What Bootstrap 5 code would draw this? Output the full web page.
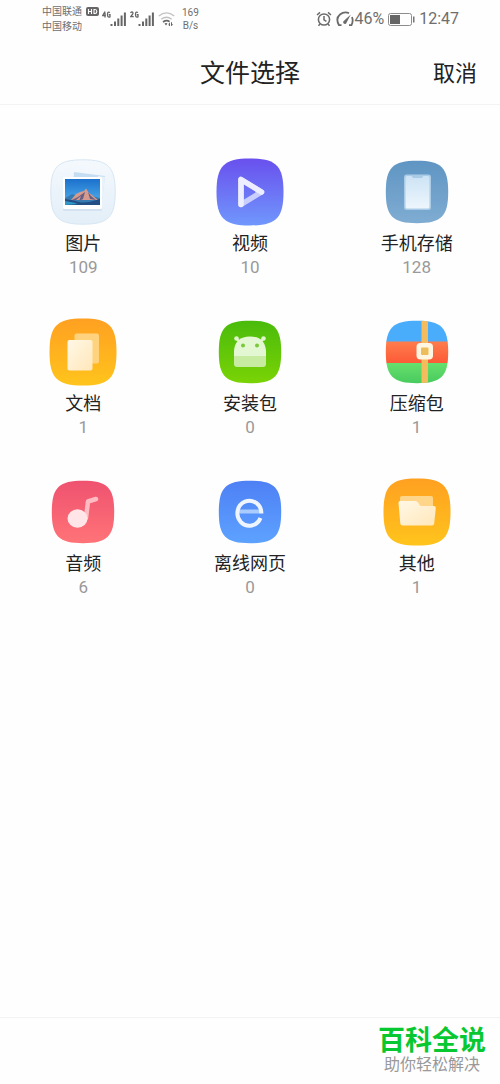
<!DOCTYPE html>
<html lang="zh-CN">
<head>
<meta charset="utf-8">
<meta name="viewport" content="width=device-width, initial-scale=1">
<title>文件选择</title>
<link href="https://cdn.jsdelivr.net/npm/bootstrap@5.3.0/dist/css/bootstrap.min.css" rel="stylesheet">
<style>
body{font-family:Roboto,"Noto Sans CJK SC",sans-serif;background:#fefefe;color:#222}
svg{display:block;flex:none}
.statusbar{height:38px;padding:0 41px 0 42px;color:#6e6e6e;font-size:16px;line-height:20px}
.tiny{font-size:10px;line-height:14px;gap:3px}
.carrier{line-height:15px}
.speed{line-height:13px;margin-left:4px}
.topbar{height:67px;padding:5px 23px 0;border-bottom:1px solid #f3f3f3}
.topbar h1{font-size:25px;line-height:32px;font-weight:400}
.cancel{font-size:22px;line-height:32px;color:#222}
.tiles{padding-top:52px}
.tile{height:160px;color:#222}
.tile svg{width:70px;height:70px}
.tile-name{font-size:18px;line-height:24px;margin-top:5px}
.tile-count{font-size:17px;line-height:22px;color:#999}
.bottombar{height:67px;padding:7px 14px 0 0;border-top:1px solid #f3f3f3}
.brand{font-size:27px;line-height:32px;font-weight:700;color:#08c832}
.slogan{font-size:16px;line-height:16px;color:#999}
</style>
</head>
<body>
<svg width="0" height="0" class="position-absolute" aria-hidden="true">
<defs>
<path id="sq" d="M0-100C78-100 100-78 100 0S78 100 0 100-100 78-100 0-78-100 0-100Z"/>
<linearGradient id="gPic" x2="0" y2="1"><stop stop-color="#f4f9fd"/><stop offset="1" stop-color="#e3eef8"/></linearGradient>
<linearGradient id="gVid" x2="0" y2="1"><stop stop-color="#6950ee"/><stop offset="1" stop-color="#7097fc"/></linearGradient>
<linearGradient id="gPho" x2="0" y2="1"><stop stop-color="#5f95c3"/><stop offset="1" stop-color="#7facd2"/></linearGradient>
<linearGradient id="gOra" x2="0" y2="1"><stop stop-color="#ffa021"/><stop offset="1" stop-color="#ffc41c"/></linearGradient>
<linearGradient id="gGre" x2="0" y2="1"><stop stop-color="#4abb0b"/><stop offset="1" stop-color="#7ad305"/></linearGradient>
<linearGradient id="gRed" x2="0" y2="1"><stop stop-color="#ef5270"/><stop offset="1" stop-color="#ff7377"/></linearGradient>
<linearGradient id="gBlu" x2="0" y2="1"><stop stop-color="#4e80f5"/><stop offset="1" stop-color="#5da2ff"/></linearGradient>
<linearGradient id="gSky" x2="0" y2="1"><stop stop-color="#1b70cc"/><stop offset="1" stop-color="#55b5ef"/></linearGradient>
<linearGradient id="gZr" x2="0" y2="1"><stop stop-color="#ff7d4c"/><stop offset="1" stop-color="#fc5a38"/></linearGradient>
<linearGradient id="gZg" x2="0" y2="1"><stop stop-color="#66df6d"/><stop offset="1" stop-color="#43c75b"/></linearGradient>
<linearGradient id="gScr" x2="0" y2="1"><stop stop-color="#cce3f5"/><stop offset="1" stop-color="#edf6fc"/></linearGradient>
<linearGradient id="gDoc" x2="1" y2="1"><stop stop-color="#fff8e6"/><stop offset="1" stop-color="#ffe7ba"/></linearGradient>
<clipPath id="clipZip"><use href="#sq" transform="translate(35 35) scale(.312)"/></clipPath>
</defs>
</svg>

<div class="d-flex flex-column min-vh-100">
<div class="statusbar d-flex justify-content-between align-items-center">
  <div class="d-flex align-items-center tiny">
    <div class="carrier">
      <div class="d-flex align-items-center">中国联通
        <svg class="ms-1" width="13" height="9" viewBox="0 0 13 9" role="img" aria-label="HD"><rect width="13" height="9" rx="2" fill="#666"/><path d="M2.5 2v5M5.5 2v5M2.5 4.5h3M8 2.5v4h1q1.8 0 1.8-2t-1.8-2z" fill="none" stroke="#fff" stroke-width="1.1"/></svg>
      </div>
      <div>中国移动</div>
    </div>
    <svg width="25" height="18" viewBox="0 0 25 18" role="img" aria-label="4G"><path d="M3 1.500L.7 5.500h3.200M3 2.500v5M8 2.500q-2.500-1.500-2.500 2t2.500 2.300V4.700H6.800" fill="none" stroke="#666" stroke-width="1.300"/><path d="M8.500 14h2v2h-2zM12 11.500h2V16h-2zM15.300 8.500h2V16h-2zM18.600 5.500h2V16h-2zM21.900 2.500h2V16h-2z" fill="#666"/></svg>
    <svg width="25" height="18" viewBox="0 0 25 18" role="img" aria-label="2G"><path d="M.6 3q.3-1.300 1.500-1.100 1.700.8.300 2.600L.7 6.700h3M8 2.500q-2.500-1.500-2.500 2t2.500 2.300V4.700H6.800" fill="none" stroke="#666" stroke-width="1.300"/><path d="M8.500 14h2v2h-2zM12 11.500h2V16h-2zM15.300 8.500h2V16h-2zM18.600 5.500h2V16h-2zM21.900 2.500h2V16h-2z" fill="#666"/></svg>
    <svg width="17" height="16" viewBox="0 0 17 16" role="img" aria-label="Wi-Fi"><path d="M.8 5Q8.500-1.300 16.200 5M3.200 8.200q5.300-4 10.600 0" fill="none" stroke="#c2c2c2" stroke-width="1.400"/><path d="M5 11q3.500-2.400 6.600-.4" fill="none" stroke="#666" stroke-width="1.700"/><path d="M6.500 12.500q1.500-1 3 0L8 14.500zM10.500 13l1.500-1.800V15h-1zM13 11.200h1v2h1.300L13.500 15H13z" fill="#666"/></svg>
    <div class="speed text-center">169<br>B/s</div>
  </div>
  <div class="d-flex align-items-center">
    <svg width="16" height="16" viewBox="0 0 16 16" fill="none" stroke="#6b6b6b" stroke-width="1.500" role="img" aria-label="闹钟"><circle cx="8" cy="8.500" r="5.600"/><path d="M8 5v3.800l2.400 1.500M1 4l3-2.600M15 4l-3-2.600M4 13l-1.500 1.700M12 13l1.500 1.700"/></svg>
    <svg class="ms-1" width="18" height="16" viewBox="0 0 18 16" fill="none" stroke="#6b6b6b" stroke-width="1.800" role="img" aria-label="性能"><path d="M5.500 14.200H3Q-.8 7.500 4 3.500 8 .2 13 2.100M16 6q1.600 4.300-.6 8.200h-2.400"/><path d="M14.800 3.500L10.500 11.700a1.700 1.700 0 1 1-2.500-1.900z" fill="#6b6b6b" stroke="none"/></svg>
    <span>46%</span>
    <svg class="ms-1" width="27" height="13" viewBox="0 0 27 13" role="img" aria-label="电量"><rect x=".5" y=".5" width="23" height="12" rx="2" fill="none" stroke="#8c8c8c"/><path d="M2 2h10v9H2z" fill="#666"/><path d="M25 3.500h1.500v6H25z" fill="#777"/></svg>
    <span class="ms-1">12:47</span>
  </div>
</div>

<header class="topbar row g-0 align-items-center">
  <div class="col"></div>
  <h1 class="col-auto m-0">文件选择</h1>
  <div class="col text-end"><button type="button" class="cancel btn border-0 p-0">取消</button></div>
</header>

<main class="flex-grow-1">
<div class="tiles row row-cols-3 g-0 text-center">
  <div class="col"><a href="#pictures" class="tile d-flex flex-column align-items-center text-decoration-none">
    <svg viewBox="0 0 70 70" aria-hidden="true"><use href="#sq" transform="translate(35 35) scale(.322)" fill="url(#gPic)" stroke="#d5e5f2" stroke-width="3"/><path d="M26 15l31 4-3 25-30-5z" fill="#c5ddf2"/><path d="M50 19l7 1-3 26-4-1z" fill="#e8f2fa"/><rect x="15" y="21" width="39" height="33" rx="1.500" fill="#c9d9e8" opacity=".6"/><rect x="15" y="20" width="39" height="32" rx="1.500" fill="#fff"/><path d="M17 22h35v26H17z" fill="url(#gSky)"/><path d="M17 41l7-4 6 2 6-5 8 5 8 2v7H17z" fill="#377bb3"/><path d="M23 43l5-6 4-2 4-1 2-2.500 3 4.500 3 2 6 5z" fill="#d59b8c"/><path d="M37 35l-2 7-4 2 2-5-5 4-6 1 8-4zM40 35l2 7 6 1-5-4z" fill="#685f86"/><path d="M17 42q8 1 14 3t21-3v6H17z" fill="#214e84"/><path d="M17 44q7 1 13 3l-13 1z" fill="#2f9ac9"/></svg>
    <span class="tile-name">图片</span><span class="tile-count">109</span></a></div>
  <div class="col"><a href="#videos" class="tile d-flex flex-column align-items-center text-decoration-none">
    <svg viewBox="0 0 70 70" aria-hidden="true"><use href="#sq" transform="translate(35 35) scale(.335)" fill="url(#gVid)"/><path d="M26 22.500v25L46.500 35z" fill="none" stroke="#c9cefd" stroke-width="5.500" stroke-linejoin="round"/><path d="M26 47.500v-25L46.500 35" fill="none" stroke="#edeeff" stroke-width="5.500" stroke-linecap="round" stroke-linejoin="round"/></svg>
    <span class="tile-name">视频</span><span class="tile-count">10</span></a></div>
  <div class="col"><a href="#storage" class="tile d-flex flex-column align-items-center text-decoration-none">
    <svg viewBox="0 0 70 70" aria-hidden="true"><use href="#sq" transform="translate(35 35) scale(.312)" fill="url(#gPho)"/><rect x="22" y="17.500" width="27" height="35.500" rx="2.500" fill="#a9cbe5"/><path d="M25 19h4.500l1.500 2h9l1.500-2H46q1.500 0 1.500 1.500v29.500Q47.500 51.500 46 51.500H25q-1.500 0-1.500-1.500V20.500Q23.500 19 25 19z" fill="url(#gScr)"/></svg>
    <span class="tile-name">手机存储</span><span class="tile-count">128</span></a></div>
  <div class="col"><a href="#documents" class="tile d-flex flex-column align-items-center text-decoration-none">
    <svg viewBox="0 0 70 70" aria-hidden="true"><use href="#sq" transform="translate(35 35) scale(.335)" fill="url(#gOra)"/><rect x="26.500" y="16.500" width="24.500" height="30" rx="2" fill="#ffd37e"/><rect x="19.500" y="23" width="25" height="30.500" rx="2" fill="url(#gDoc)"/></svg>
    <span class="tile-name">文档</span><span class="tile-count">1</span></a></div>
  <div class="col"><a href="#packages" class="tile d-flex flex-column align-items-center text-decoration-none">
    <svg viewBox="0 0 70 70" aria-hidden="true"><use href="#sq" transform="translate(35 35) scale(.312)" fill="url(#gGre)"/><path d="M21.500 21.500l4.500 5M48.500 21.500l-4.500 5" stroke="#dff5cb" stroke-width="2.500"/><circle cx="21.500" cy="21.500" r="2.300" fill="#dff5cb"/><circle cx="48.500" cy="21.500" r="2.300" fill="#dff5cb"/><path d="M19 39v-5q1-14.500 16-14.500T51 34v5z" fill="#e3f7d2"/><path d="M19 39h32v8q0 3-3 3H22q-3 0-3-3z" fill="#c6eba1"/><circle cx="28" cy="28.500" r="2" fill="#77ca3c"/><circle cx="42" cy="28.500" r="2" fill="#77ca3c"/></svg>
    <span class="tile-name">安装包</span><span class="tile-count">0</span></a></div>
  <div class="col"><a href="#archives" class="tile d-flex flex-column align-items-center text-decoration-none">
    <svg viewBox="0 0 70 70" aria-hidden="true"><g clip-path="url(#clipZip)"><path d="M0 0h70v25H0z" fill="#49adfc"/><path d="M0 24.500h70v21.500H0z" fill="url(#gZr)"/><path d="M0 46h70v24H0z" fill="url(#gZg)"/><path d="M39.500 0H46v70h-6.500z" fill="#f4bc5c"/></g><rect x="34.500" y="26" width="16.500" height="16.500" rx="4" fill="#fff6e2"/><rect x="39" y="30.500" width="7.500" height="7.500" rx="1" fill="#edbd5b"/></svg>
    <span class="tile-name">压缩包</span><span class="tile-count">1</span></a></div>
  <div class="col"><a href="#audio" class="tile d-flex flex-column align-items-center text-decoration-none">
    <svg viewBox="0 0 70 70" aria-hidden="true"><use href="#sq" transform="translate(35 35) scale(.312)" fill="url(#gRed)"/><path d="M38 41l2-16.500 8-2.500" fill="none" stroke="#ffbcc3" stroke-width="4.500" stroke-linecap="round" stroke-linejoin="round"/><ellipse cx="29.500" cy="41.500" rx="10" ry="9.200" fill="#ffe5e7"/></svg>
    <span class="tile-name">音频</span><span class="tile-count">6</span></a></div>
  <div class="col"><a href="#webpages" class="tile d-flex flex-column align-items-center text-decoration-none">
    <svg viewBox="0 0 70 70" aria-hidden="true"><use href="#sq" transform="translate(35 35) scale(.312)" fill="url(#gBlu)"/><path d="M24 34.500h21" stroke="#a9ccfc" stroke-width="4"/><path d="M46.400 36.500A12 12.500 0 1 0 45.500 41" fill="none" stroke="#eef5ff" stroke-width="4"/></svg>
    <span class="tile-name">离线网页</span><span class="tile-count">0</span></a></div>
  <div class="col"><a href="#others" class="tile d-flex flex-column align-items-center text-decoration-none">
    <svg viewBox="0 0 70 70" aria-hidden="true"><use href="#sq" transform="translate(35 35) scale(.335)" fill="url(#gOra)"/><path d="M18 24v-3q0-2 2-2h29q2 0 2 2v10H18z" fill="#ffd58a"/><path d="M18 24h15.500q1.500 0 2.500 1.500l1.500 2.500q.5 1 2 1H52q2 0 1.800 2l-1.600 15.500q-.2 2-2.200 2H20.500q-2 0-2.200-2L16.500 26q0-2 1.500-2z" fill="url(#gDoc)"/></svg>
    <span class="tile-name">其他</span><span class="tile-count">1</span></a></div>
</div>
</main>

<footer class="bottombar d-flex flex-column align-items-end">
  <div class="text-center"><div class="brand">百科全说</div><div class="slogan">助你轻松解决</div></div>
</footer>
</div>
<script src="https://cdn.jsdelivr.net/npm/bootstrap@5.3.0/dist/js/bootstrap.bundle.min.js"></script>
</body>
</html>
